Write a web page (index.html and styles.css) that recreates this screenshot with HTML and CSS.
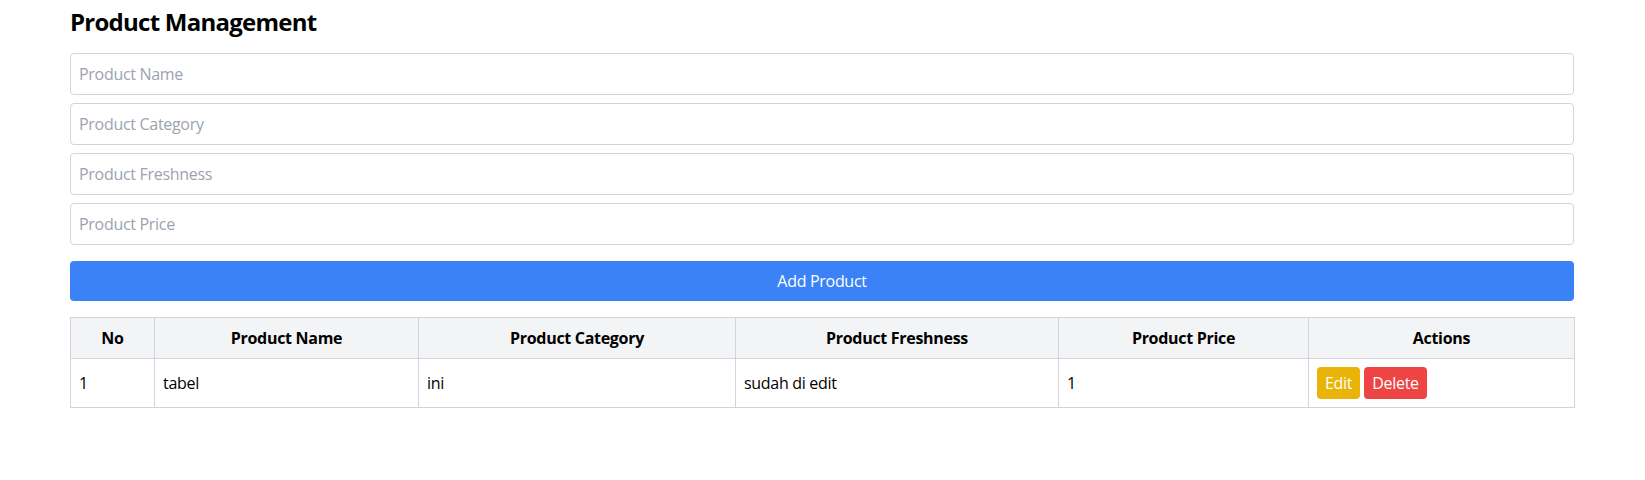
FILE: index.html
```html
<!DOCTYPE html>
<html lang="en">
<head>
<meta charset="utf-8">
<title>Product Management</title>
<link rel="stylesheet" href="styles.css">
</head>
<body>
<div class="container">
  <h1 class="title">Product Management</h1>
  <form class="form">
    <input class="field" type="text" placeholder="Product Name">
    <input class="field" type="text" placeholder="Product Category">
    <input class="field" type="text" placeholder="Product Freshness">
    <input class="field" type="text" placeholder="Product Price">
    <button class="btn-add" type="button">Add Product</button>
  </form>
  <table class="table">
    <colgroup>
      <col class="col-no">
      <col class="col-name">
      <col class="col-cat">
      <col class="col-fresh">
      <col class="col-price">
      <col class="col-act">
    </colgroup>
    <thead>
      <tr>
        <th>No</th>
        <th>Product Name</th>
        <th>Product Category</th>
        <th>Product Freshness</th>
        <th>Product Price</th>
        <th>Actions</th>
      </tr>
    </thead>
    <tbody>
      <tr>
        <td>1</td>
        <td>tabel</td>
        <td>ini</td>
        <td>sudah di edit</td>
        <td>1</td>
        <td><button class="btn btn-edit" type="button">Edit</button><button class="btn btn-delete" type="button">Delete</button></td>
      </tr>
    </tbody>
  </table>
</div>
</body>
</html>
```
FILE: styles.css
```css
* { box-sizing: border-box; }
html, body { margin: 0; padding: 0; background: #fff; }
body {
  font-family: "Open Sans", "Noto Sans", sans-serif;
  font-size: 16px;
  line-height: 24px;
  letter-spacing: -0.3px;
  color: #000;
}
.container {
  max-width: 1536px;
  margin: 0 auto;
  padding: 6px 16.5px 16px 15.5px;
}
.title {
  margin: 0 0 15px;
  font-size: 24px;
  line-height: 32px;
  font-weight: 700;
  letter-spacing: -0.75px;
}
.form {
  display: flex;
  flex-direction: column;
  gap: 8px;
  margin: 0 0 16px;
}
.field {
  display: block;
  width: 100%;
  height: 42px;
  padding: 8px 8px;
  border: 1px solid #d1d5db;
  border-radius: 4px;
  font: inherit;
  letter-spacing: inherit;
  color: #000;
  background: #fff;
  outline: none;
}
.field::placeholder { color: #9ca3af; }
.btn-add {
  margin-top: 8px;
  height: 40px;
  width: 100%;
  border: 0;
  border-radius: 4px;
  background: #3b82f6;
  color: #fff;
  font: inherit;
  letter-spacing: inherit;
  padding: 8px 16px;
}
.table {
  width: 100%;
  border-collapse: collapse;
  table-layout: fixed;
  border: 1px solid #d1d5db;
}
.col-no { width: 84px; }
.col-name { width: 264px; }
.col-cat { width: 317px; }
.col-fresh { width: 323px; }
.col-price { width: 250px; }
.col-act { width: 266px; }
.table th, .table td {
  border: 1px solid #d1d5db;
  padding: 8px;
  vertical-align: middle;
}
.table th {
  background: #f3f4f6;
  font-weight: 700;
  text-align: center;
}
.table td { text-align: left; }
.btn {
  height: 32px;
  padding: 4px 8px;
  border: 0;
  border-radius: 4px;
  color: #fff;
  font: inherit;
  letter-spacing: inherit;
  vertical-align: middle;
}
.btn-edit { background: #eab308; margin-right: 4px; }
.btn-delete { background: #ef4444; }
```
